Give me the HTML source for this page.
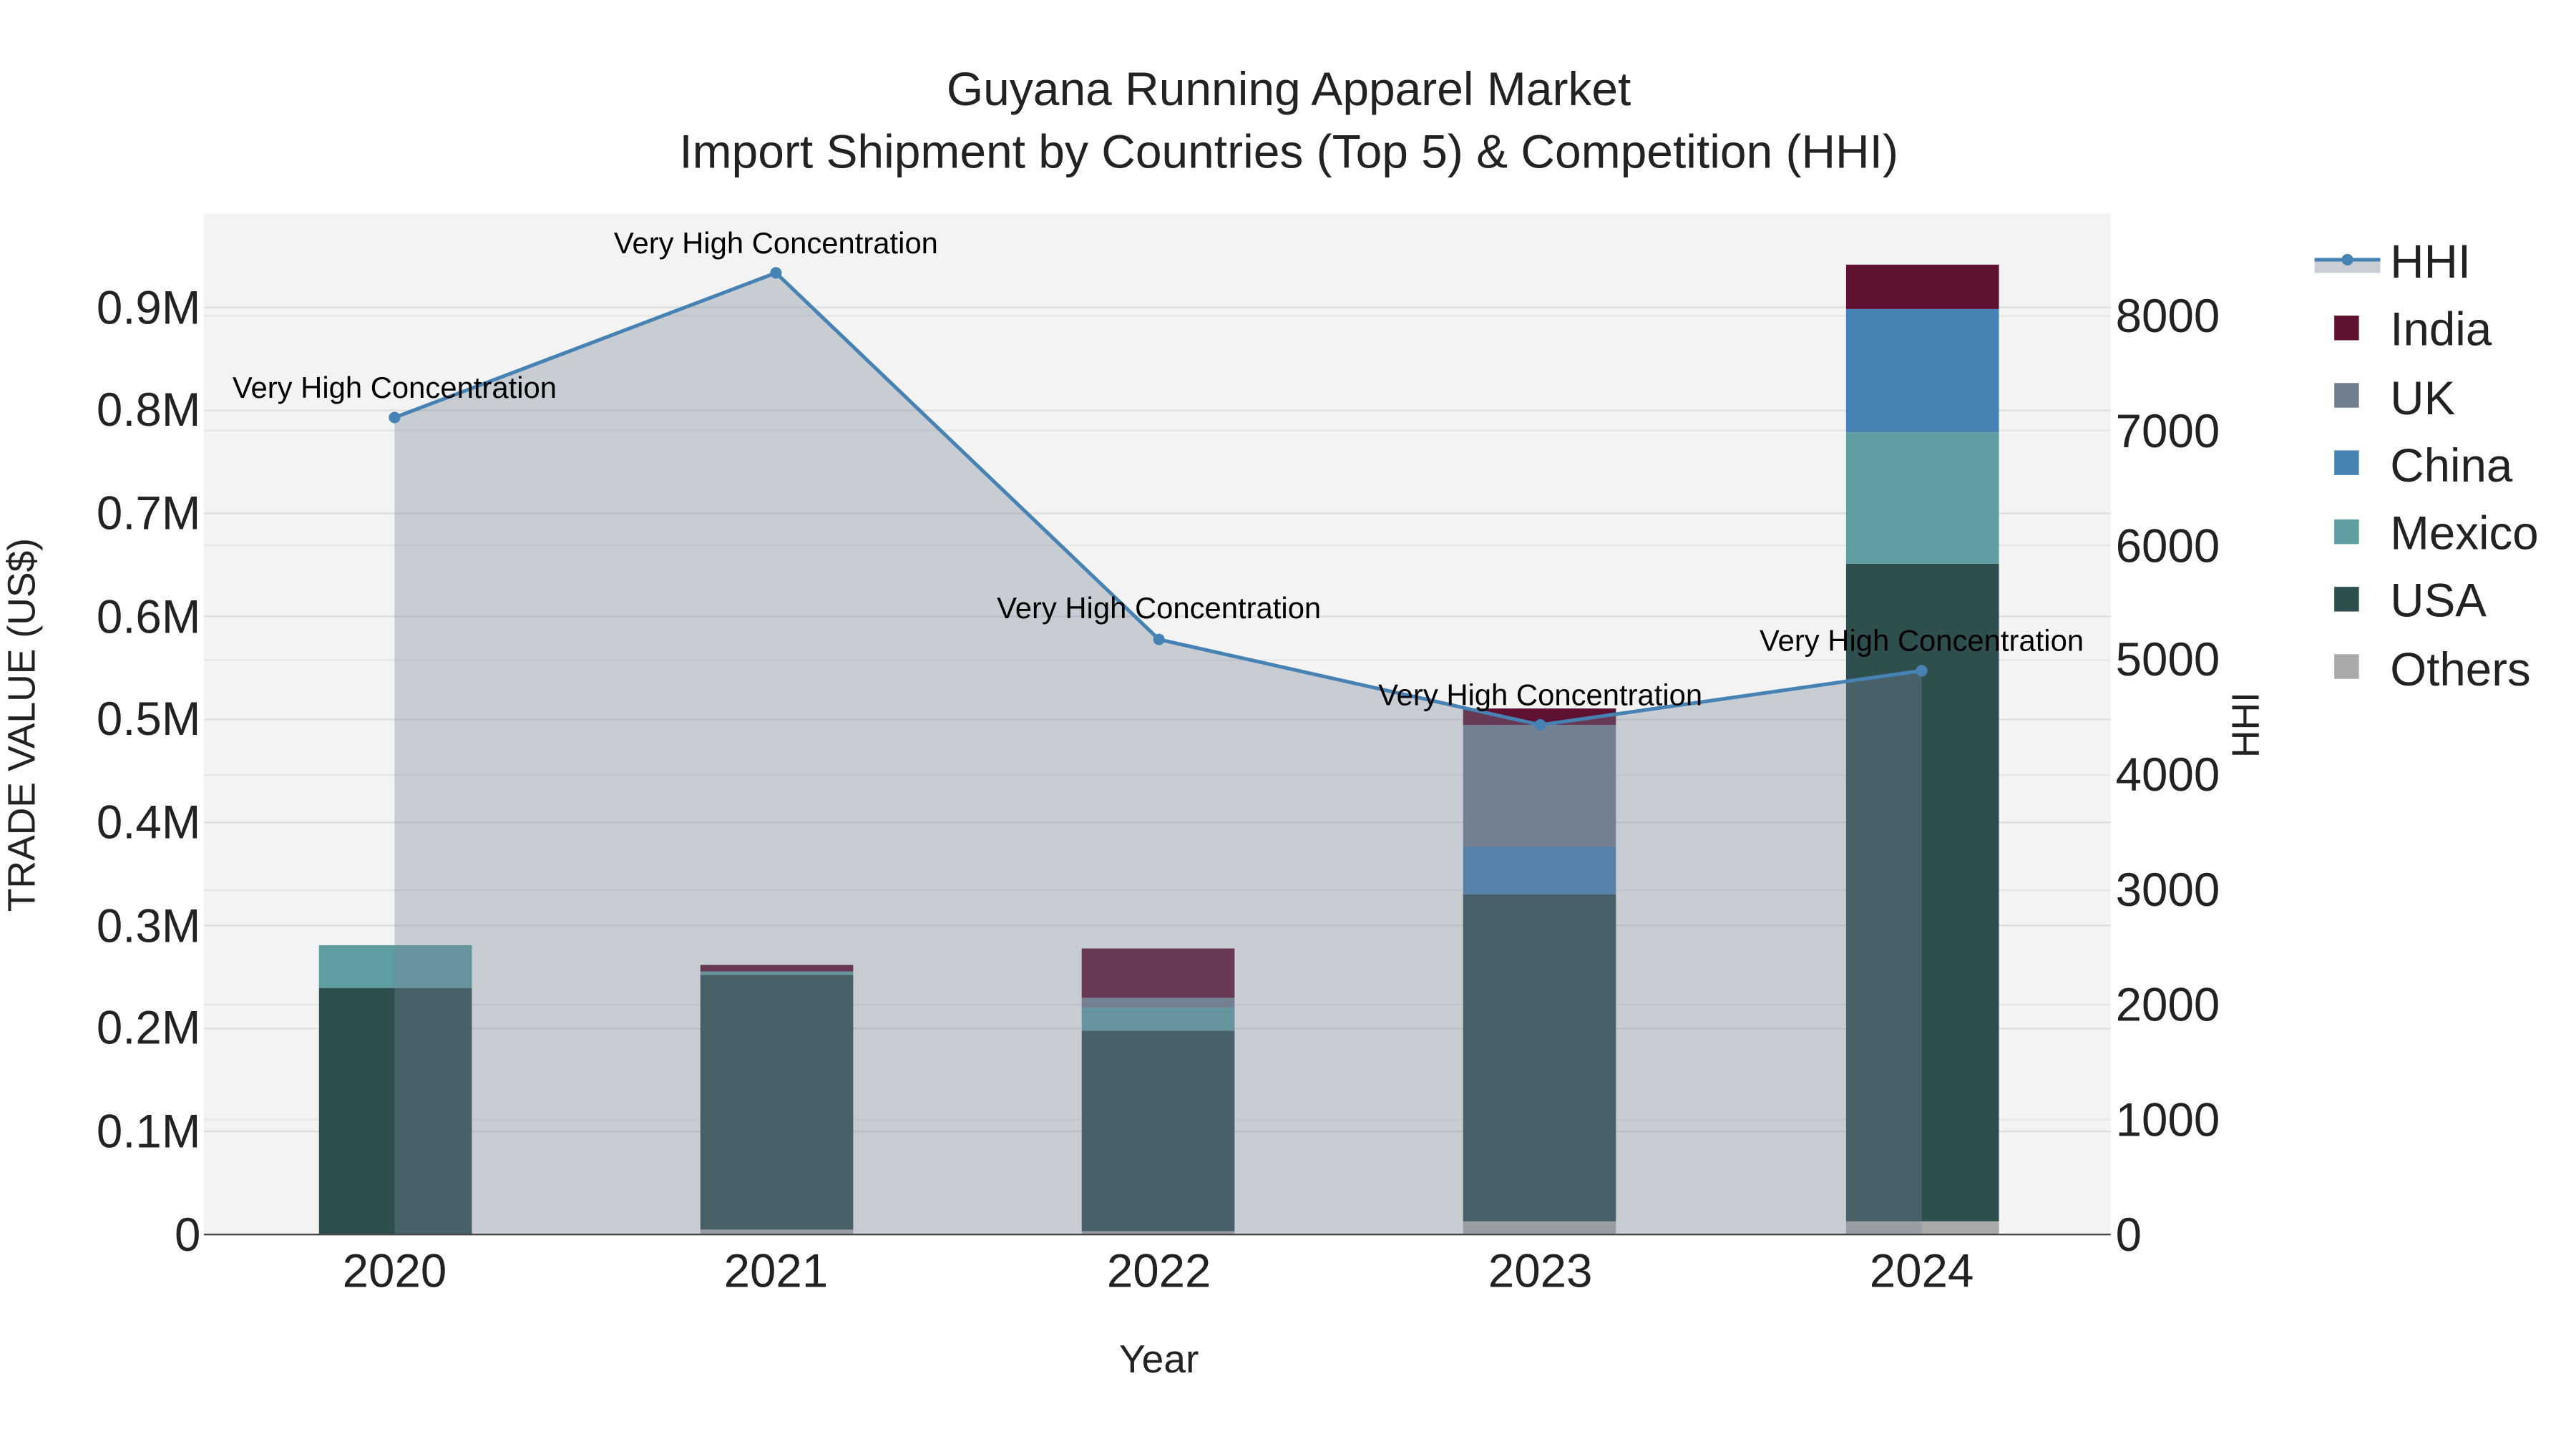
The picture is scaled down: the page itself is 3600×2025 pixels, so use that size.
<!DOCTYPE html>
<html><head><meta charset="utf-8"><style>
html,body{margin:0;padding:0;background:#fff;}
svg{display:block;font-family:"Liberation Sans",Arial,sans-serif;}
</style></head><body>
<svg width="3600" height="2025" viewBox="0 0 1567 881.5" xmlns="http://www.w3.org/2000/svg">
<rect x="0" y="0" width="1567" height="881.5" fill="#fff"/>
<rect x="124" y="130" width="1160" height="621" fill="#f3f3f3"/>
<g stroke="#e6e6e6" stroke-width="1">
<line x1="124" x2="1284" y1="681.1" y2="681.1"/><line x1="124" x2="1284" y1="611.2" y2="611.2"/>
<line x1="124" x2="1284" y1="541.4" y2="541.4"/><line x1="124" x2="1284" y1="471.5" y2="471.5"/>
<line x1="124" x2="1284" y1="401.6" y2="401.6"/><line x1="124" x2="1284" y1="331.7" y2="331.7"/>
<line x1="124" x2="1284" y1="261.9" y2="261.9"/><line x1="124" x2="1284" y1="192" y2="192"/>
</g>
<g stroke="#dedede" stroke-width="1">
<line x1="124" x2="1284" y1="688.3" y2="688.3"/><line x1="124" x2="1284" y1="625.7" y2="625.7"/>
<line x1="124" x2="1284" y1="563" y2="563"/><line x1="124" x2="1284" y1="500.3" y2="500.3"/>
<line x1="124" x2="1284" y1="437.7" y2="437.7"/><line x1="124" x2="1284" y1="375" y2="375"/>
<line x1="124" x2="1284" y1="312.3" y2="312.3"/><line x1="124" x2="1284" y1="249.7" y2="249.7"/>
<line x1="124" x2="1284" y1="187" y2="187"/>
</g>
<g>
<rect x="194" y="601" width="93" height="150" fill="#2f4f4f"/>
<rect x="194" y="575" width="93" height="26" fill="#5f9ea0"/>

<rect x="426" y="748" width="93" height="3" fill="#a9a9a9"/>
<rect x="426" y="593" width="93" height="155" fill="#2f4f4f"/>
<rect x="426" y="591" width="93" height="2" fill="#5f9ea0"/>
<rect x="426" y="587" width="93" height="4" fill="#5f1132"/>

<rect x="658" y="749" width="93" height="2" fill="#a9a9a9"/>
<rect x="658" y="627" width="93" height="122" fill="#2f4f4f"/>
<rect x="658" y="613" width="93" height="14" fill="#5f9ea0"/>
<rect x="658" y="607" width="93" height="6" fill="#708090"/>
<rect x="658" y="577" width="93" height="30" fill="#5f1132"/>

<rect x="890" y="743" width="93" height="8" fill="#a9a9a9"/>
<rect x="890" y="544" width="93" height="199" fill="#2f4f4f"/>
<rect x="890" y="515" width="93" height="29" fill="#4682b4"/>
<rect x="890" y="441" width="93" height="74" fill="#708090"/>
<rect x="890" y="431" width="93" height="10" fill="#5f1132"/>

<rect x="1123" y="743" width="93" height="8" fill="#a9a9a9"/>
<rect x="1123" y="343" width="93" height="400" fill="#2f4f4f"/>
<rect x="1123" y="263" width="93" height="80" fill="#5f9ea0"/>
<rect x="1123" y="188" width="93" height="75" fill="#4682b4"/>
<rect x="1123" y="161" width="93" height="27" fill="#5f1132"/>
</g>
<polygon points="240,751 240,254 472,166 705,389 937,441 1169,408 1169,751" fill="rgb(119,132,151)" fill-opacity="0.35"/>
<polyline points="240,254 472,166 705,389 937,441 1169,408" fill="none" stroke="#4682b4" stroke-width="2.2"/>
<g fill="#4682b4"><circle cx="240" cy="254" r="3.5"/><circle cx="472" cy="166" r="3.5"/><circle cx="705" cy="389" r="3.5"/><circle cx="937" cy="441" r="3.5"/><circle cx="1169" cy="408" r="3.5"/></g>
<line x1="124" x2="1284" y1="751" y2="751" stroke="#444" stroke-width="1"/>
<g font-size="18.2" fill="#000" text-anchor="middle">
<text x="240" y="242">Very High Concentration</text>
<text x="472" y="154">Very High Concentration</text>
<text x="705" y="376">Very High Concentration</text>
<text x="937" y="429">Very High Concentration</text>
<text x="1169" y="396">Very High Concentration</text>
</g>
<g font-size="28.5" fill="#222" text-anchor="end">
<text x="122" y="761">0</text><text x="122" y="698">0.1M</text><text x="122" y="635">0.2M</text>
<text x="122" y="573">0.3M</text><text x="122" y="510">0.4M</text><text x="122" y="447">0.5M</text>
<text x="122" y="385">0.6M</text><text x="122" y="322">0.7M</text><text x="122" y="259">0.8M</text>
<text x="122" y="197">0.9M</text>
</g>
<g font-size="28.5" fill="#222" text-anchor="start">
<text x="1287" y="761">0</text><text x="1287" y="691">1000</text><text x="1287" y="621">2000</text>
<text x="1287" y="551">3000</text><text x="1287" y="481">4000</text><text x="1287" y="411">5000</text>
<text x="1287" y="342">6000</text><text x="1287" y="272">7000</text><text x="1287" y="202">8000</text>
</g>
<g font-size="28.5" fill="#222" text-anchor="middle">
<text x="240" y="783">2020</text><text x="472" y="783">2021</text><text x="705" y="783">2022</text>
<text x="937" y="783">2023</text><text x="1169" y="783">2024</text>
</g>
<text x="705" y="835" font-size="24" fill="#222" text-anchor="middle">Year</text>
<text transform="translate(21,441) rotate(-90)" font-size="23.3" fill="#222" text-anchor="middle">TRADE VALUE (US$)</text>
<text transform="translate(1374,441) rotate(-90)" font-size="23.3" fill="#222" text-anchor="middle">HHI</text>
<g font-size="28.7" fill="#222" text-anchor="middle">
<text x="784" y="64">Guyana Running Apparel Market</text>
<text x="784" y="102">Import Shipment by Countries (Top 5) &amp; Competition (HHI)</text>
</g>
<g font-size="28.5" fill="#222">
<rect x="1408" y="159" width="40" height="7" fill="rgb(119,132,151)" fill-opacity="0.4"/>
<line x1="1408" x2="1448" y1="158" y2="158" stroke="#4682b4" stroke-width="2.2"/>
<circle cx="1428" cy="158" r="3.5" fill="#4682b4"/>
<text x="1454" y="169">HHI</text>
<rect x="1420" y="192" width="15" height="15" fill="#5f1132"/><text x="1454" y="210">India</text>
<rect x="1420" y="233" width="15" height="15" fill="#708090"/><text x="1454" y="252">UK</text>
<rect x="1420" y="274" width="15" height="15" fill="#4682b4"/><text x="1454" y="293">China</text>
<rect x="1420" y="316" width="15" height="15" fill="#5f9ea0"/><text x="1454" y="334">Mexico</text>
<rect x="1420" y="357" width="15" height="15" fill="#2f4f4f"/><text x="1454" y="375">USA</text>
<rect x="1420" y="398" width="15" height="15" fill="#a9a9a9"/><text x="1454" y="417">Others</text>
</g>
</svg>
</body></html>
